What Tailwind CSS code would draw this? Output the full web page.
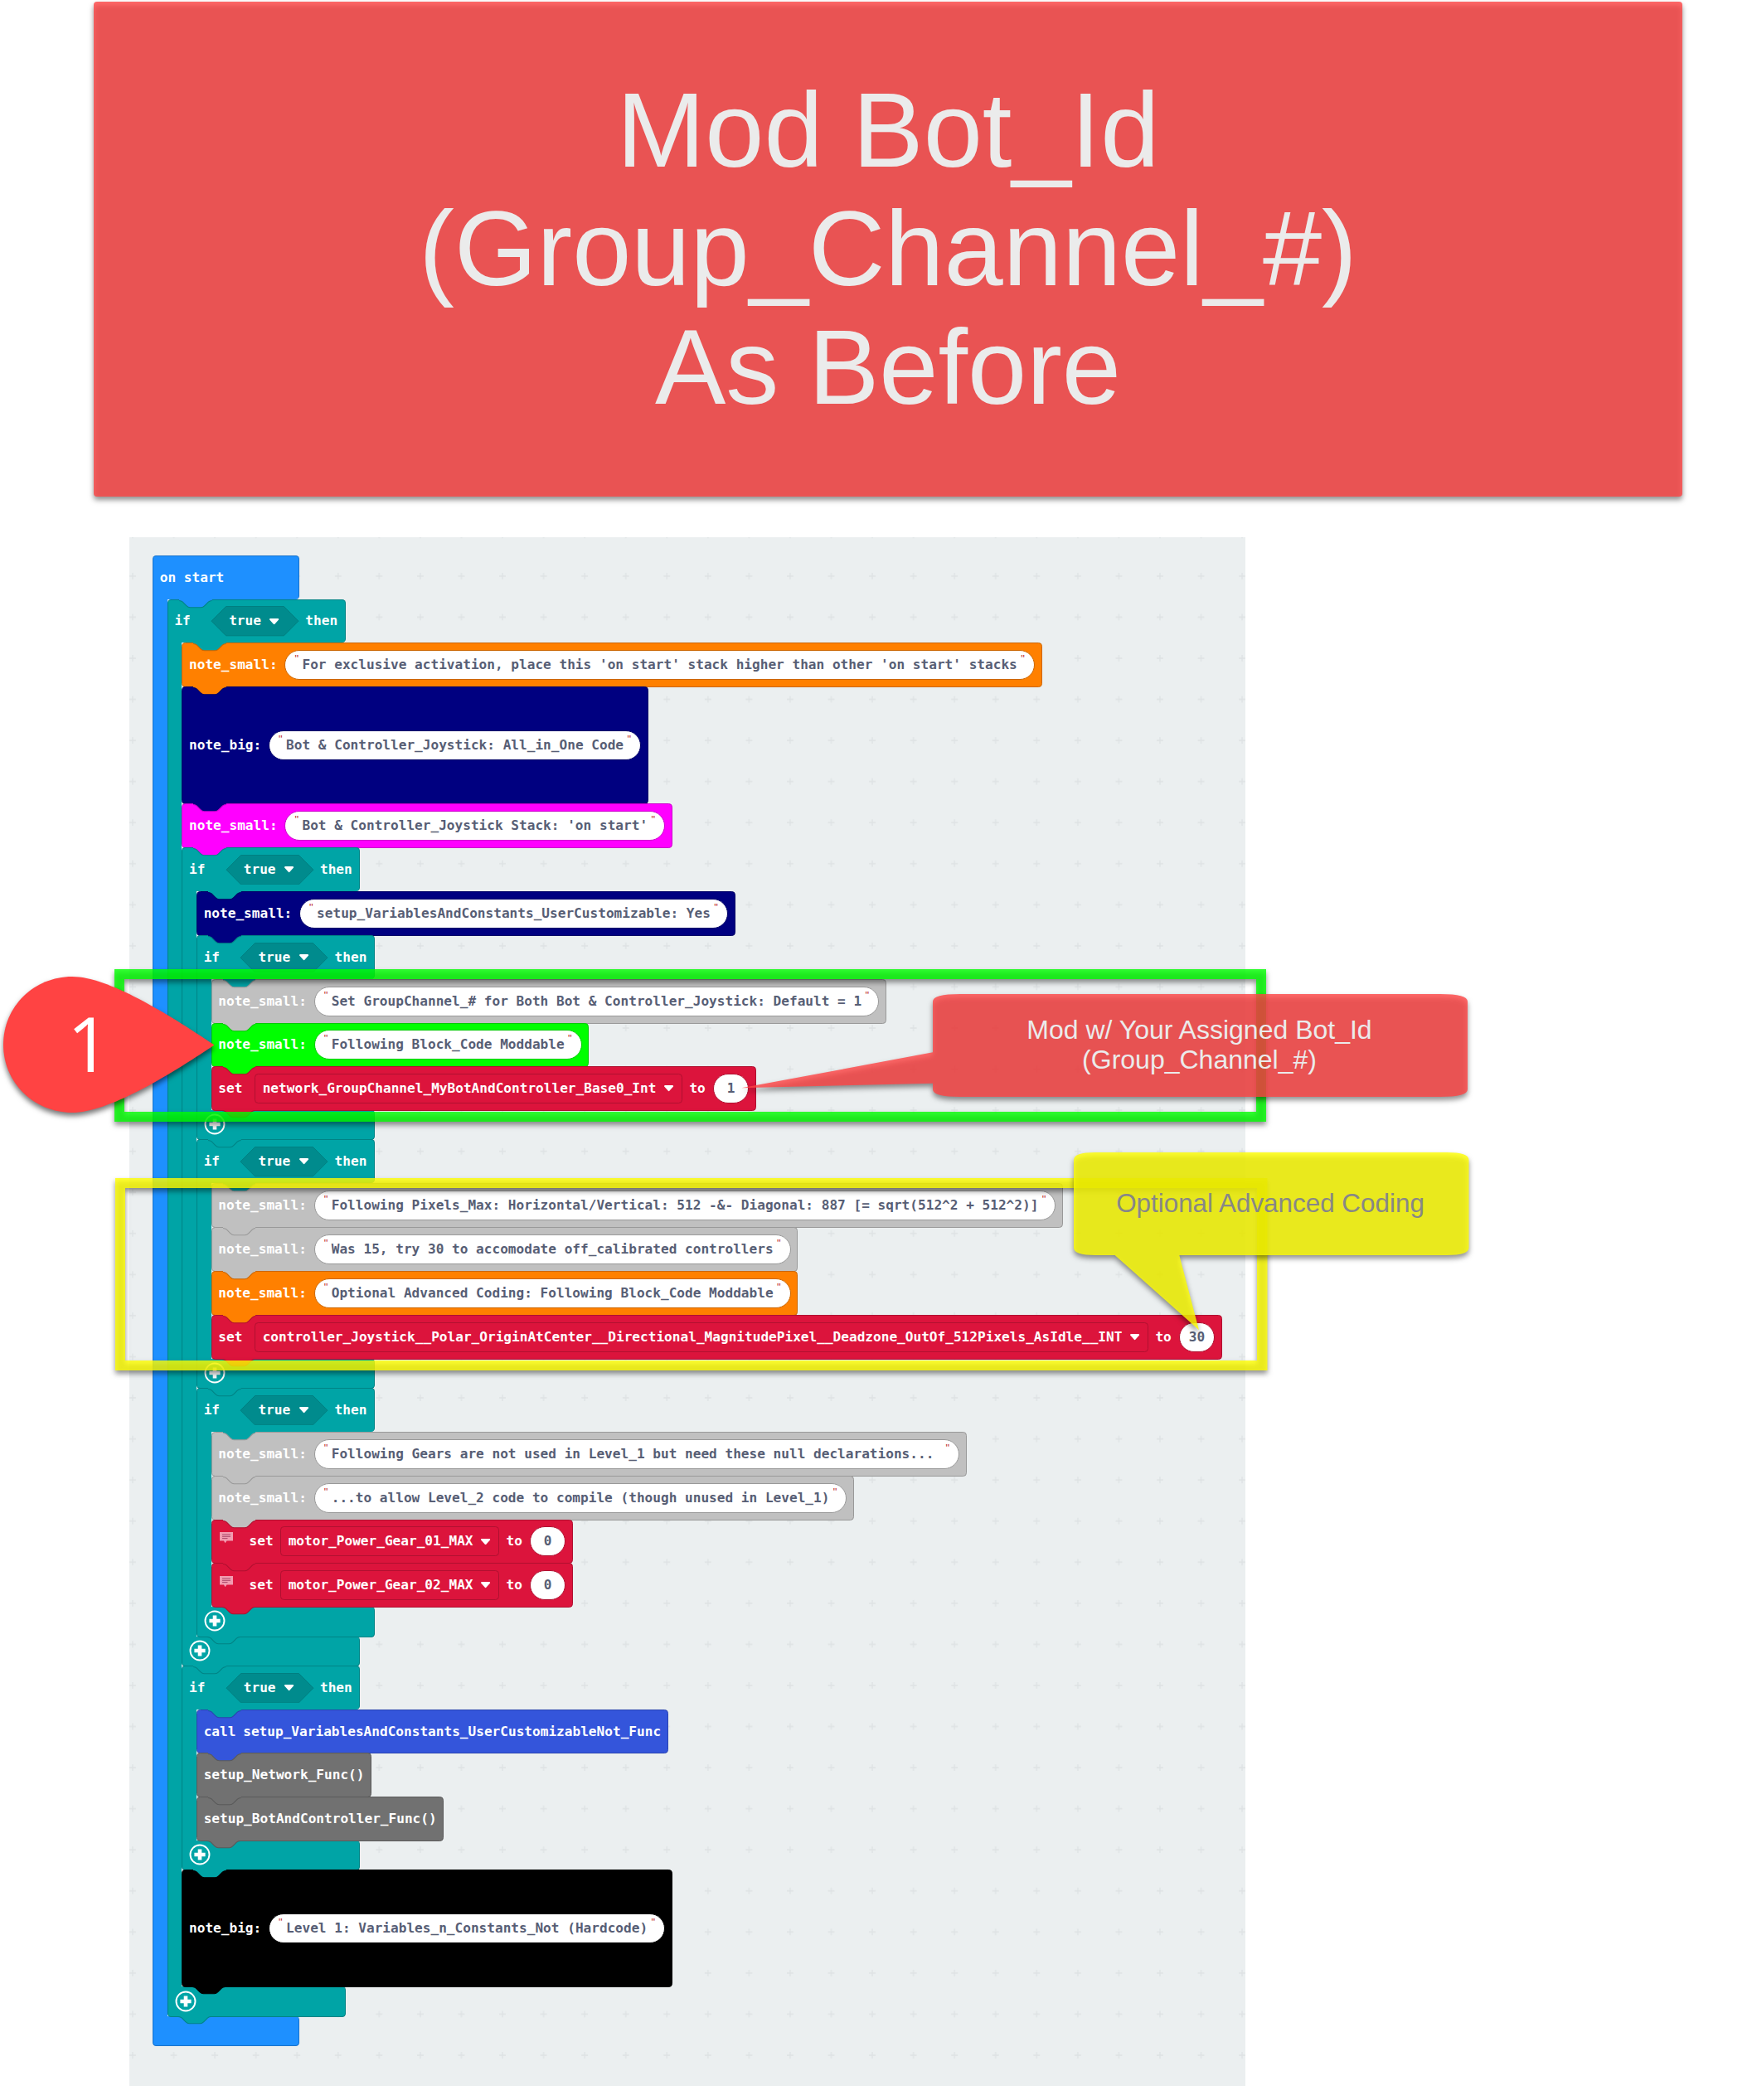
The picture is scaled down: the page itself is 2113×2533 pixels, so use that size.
<!DOCTYPE html>
<html lang="en">
<head>
<meta charset="utf-8">
<title>Mod Bot_Id</title>
<script src="https://cdn.jsdelivr.net/npm/@tailwindcss/browser@4"></script>
</head>
<body class="bg-white">
<div class="relative w-[2113px] h-[2533px] overflow-hidden">

  <!-- Title banner -->
  <header class="relative ml-[113px] mt-[2px] w-[1916px] h-[597px]">
    <div class="absolute inset-0 rounded-[4px] bg-[#ff4343]/80 [filter:drop-shadow(0_4px_3px_rgba(0,0,0,0.54))]"></div>
    <h1 class="relative pt-[83px] text-center text-[128px] leading-[143px] text-[#ebebeb] font-['Liberation_Sans',sans-serif]">Mod Bot_Id<br>(Group_Channel_#)<br>As Before</h1>
  </header>

  <!-- Block workspace -->
  <main class="relative isolate ml-[156px] mt-[49px] w-[1346px] h-[1868px] bg-[#ebeff0] pl-[28px] pt-[21.7px] overflow-hidden">
    <svg class="absolute inset-0 w-full h-full" aria-hidden="true">
      <defs>
        <pattern id="grid" width="49.56" height="49.56" patternUnits="userSpaceOnUse" x="-20.8" y="-27.5">
          <path d="M24.78 20.8v8M20.8 24.78h8" stroke="#dee2e4" stroke-width="1.3"/>
        </pattern>
      </defs>
      <rect width="100%" height="100%" fill="url(#grid)"/>
    </svg>
    <div id="stack" class="relative flex flex-col items-start font-['DejaVu_Sans_Mono',monospace] font-bold text-[16.1px] leading-[20px] text-white whitespace-pre"></div>
  </main>

  <!-- Annotations drawn over the workspace -->
  <svg class="absolute z-50 left-0 top-0 w-[2113px] h-[2533px] font-['Liberation_Sans',sans-serif]" viewBox="0 0 2113 2533">
    <g class="[filter:drop-shadow(0_4px_3px_rgba(0,0,0,0.54))]">
      <path fill="#00ff00" fill-opacity=".8" fill-rule="evenodd" d="M138 1169H1527V1353H138ZM150 1181V1341H1515V1181Z"/>
    </g>
    <g class="[filter:drop-shadow(0_4px_3px_rgba(0,0,0,0.54))]">
      <path fill="#ffff00" fill-opacity=".8" fill-rule="evenodd" d="M139 1421H1528.500V1653H139ZM151 1433V1641H1516V1433Z"/>
    </g>
    <g class="[filter:drop-shadow(0_4px_3px_rgba(0,0,0,0.54))]">
      <path fill="#ff4343" fill-opacity=".8" d="M1158 1199H1737Q1770 1199 1770 1208V1314Q1770 1323 1737 1323H1158Q1125 1323 1125 1314V1306.700L894.300 1312.300L1125 1269.300V1208Q1125 1199 1158 1199Z"/>
    </g>
    <g class="[filter:drop-shadow(0_4px_3px_rgba(0,0,0,0.54))]">
      <path fill="#ffff00" fill-opacity=".8" d="M1321 1390H1745Q1771.500 1390 1771.500 1399V1505Q1771.500 1514 1745 1514H1422.300L1446 1604.300L1344.600 1514H1321Q1295 1514 1295 1505V1399Q1295 1390 1321 1390Z"/>
    </g>
    <g class="[filter:drop-shadow(0_4px_3px_rgba(0,0,0,0.54))]">
      <path fill="#ff4343" d="M258.500 1260.500C201 1222 130 1178 87 1178C41 1178 4 1214 4 1260S41 1342 87 1342C130 1342 201 1299 258.500 1260.500Z"/>
    </g>
    <g text-anchor="middle">
      <text x="107" y="1293" font-size="91" fill="#fff" class="font-['Open_Sans',sans-serif]">1</text>
      <g font-size="32" fill="#ebebeb">
        <text x="1446.500" y="1253">Mod w/ Your Assigned Bot_Id</text>
        <text x="1446.500" y="1289">(Group_Channel_#)</text>
      </g>
      <text x="1532" y="1462" font-size="31.400" fill="#878787">Optional Advanced Coding</text>
    </g>
  </svg>
</div>

<script>
// fill and outline colour of each block family
const C = {
  blue: ['#1e90ff', '#1873cc'], teal: ['#00a4a6', '#008385'], orange: ['#ff8000', '#cc6600'],
  navy: ['#000080', '#000066'], magenta: ['#ff00ff', '#cc00cc'], gray: ['#c0c0c0', '#999999'],
  green: ['#00ff00', '#00cc00'], red: ['#dc143c', '#b01030'], call: ['#3455db', '#2a44af'],
  func: ['#717171', '#5a5a5a'], black: ['#000000', '#000000'],
};
const esc = s => s.replace(/&/g, '&amp;');
const notch = (fill, stroke) => fill ? `<svg class="absolute left-[13.2px] -top-px w-[39.7px] h-[11px]" viewBox="0 -0.9 36 10" preserveAspectRatio="none"><path d="M0 -1V.4C2 .4 3 1 4 2l4 4c1 1 2 2 4 2h12c2 0 3-1 4-2l4-4c1-1 2-1.600 4-1.600V-1z" fill="${fill}"/><path d="M0 .4C2 .4 3 1 4 2l4 4c1 1 2 2 4 2h12c2 0 3-1 4-2l4-4c1-1 2-1.600 4-1.600" fill="none" stroke="${stroke}" stroke-width="1"/></svg>` : '';
const arrow = '<svg class="w-[13.2px] h-[8.8px] shrink-0 -mt-px" viewBox="0 0 12 8"><path d="M2 .8h8c1 0 1.400 1 .8 1.700L6.900 6.900a1.200 1.200 0 0 1-1.800 0L1.200 2.500C.6 1.800 1 .8 2 .8z" fill="#fff"/></svg>';
const pill = (s, st) => `<span class="relative flex items-center h-[36px] rounded-full border bg-white px-[20px] text-[#575e75]" style="border-color:${st}"><i class="absolute left-[11px] top-[2px] not-italic font-normal font-['Liberation_Sans',sans-serif] text-[13px] leading-[16px] text-[#c03030]">"</i>${esc(s)}<i class="absolute right-[11px] top-[2px] not-italic font-normal font-['Liberation_Sans',sans-serif] text-[13px] leading-[16px] text-[#c03030]">"</i></span>`;
const num = (s, st) => `<span class="flex items-center justify-center h-[36px] w-[43.800px] rounded-full border bg-white text-[#575e75]" style="border-color:${st}">${s}</span>`;
const comment = '<svg class="w-[16px] h-[14px] -mt-[8px] ml-[1.500px] mr-[11px] shrink-0" viewBox="0 0 16 14"><path d="M0 0h16v10.500H8.500L6.500 13.300 5 10.500H0z" fill="#f29bb0"/><path d="M3 3h10M3 5.300h10M3 7.600h6.500" stroke="#a8486a" stroke-width="1"/></svg>';

const block = (col, inner, big) => ({ col, html: prev => `<div class="relative flex items-center gap-[8.800px] px-[7.800px] -mb-px rounded-[4.400px] border ${big ? 'h-[141.970px]' : 'h-[53.870px]'}" style="background:${C[col][0]};border-color:${C[col][1]}">${notch(prev && C[prev][0], C[col][1])}${inner}</div>` });
const small = (col, s) => block(col, `<span>note_small:</span>${pill(s, C[col][1])}`);
const large = (col, s) => block(col, `<span>note_big:</span>${pill(s, C[col][1])}`, true);
const set = (name, v, note) => block('red', `${note ? comment : ''}<span class="${note ? '' : 'mr-[6.300px]'}">set</span><span class="flex items-center gap-[8.800px] h-[36px] px-[8.200px] rounded-[4.400px] border border-[#b01030]">${name}${arrow}</span><span>to</span>${num(v, '#b01030')}`);
const cap = (col, head, width, kids, plus) => ({ col, html: prev => {
  const [f, s] = C[col];
  let p = col, body = '';
  for (const k of kids) { body += k.html(p); p = k.col; }
  return `<div class="relative flex flex-col items-start">
    <div class="relative flex items-center h-[52.870px] rounded-t-[4.400px] rounded-br-[4.400px] border-t border-x pl-[7.800px]" style="width:${width}px;background:${f};border-color:${s}">${notch(prev && C[prev][0], s)}${head}</div>
    <div class="flex items-stretch"><div class="w-[17.630px] border-l" style="background:${f};border-color:${s}"></div><div class="relative z-10 flex flex-col items-start">${body}</div></div>
    <div class="relative flex items-center h-[36.220px] -mb-px rounded-b-[4.400px] rounded-tr-[4.400px] border-b border-x" style="width:${width}px;background:${f};border-color:${s}">
      <div class="absolute z-20 left-[16.600px] top-0">${notch(C[p][0], C[p][1])}</div>
      ${plus ? '<svg class="absolute z-30 left-[8px] top-[4.200px] w-[26px] h-[26px]" viewBox="0 0 26 26"><circle cx="13" cy="13" r="11.500" fill="none" stroke="#fff" stroke-width="1.900"/><path d="M13 6.400v13.200M6.400 13h13.200" stroke="#fff" stroke-width="4.600"/></svg>' : ''}
    </div></div>`;
} });
const iff = (...kids) => cap('teal', `<span>if</span><svg class="absolute left-[51.400px] top-[7.800px] w-[107px] h-[36.300px]" viewBox="-.5 -.5 107 36.300"><path d="M.5 17.650 18 0H88L105.500 17.650 88 35.300H18Z" fill="#008b8d" stroke="#007f81"/></svg><span class="absolute left-[73.500px] flex items-center gap-[9.500px]">true${arrow}</span><span class="absolute left-[165.700px]">then</span>`, 215, kids, true);

document.getElementById('stack').innerHTML = cap('blue', '<span>on start</span>', 176.7, [
  iff(
    small('orange', "For exclusive activation, place this 'on start' stack higher than other 'on start' stacks"),
    large('navy', 'Bot & Controller_Joystick: All_in_One Code'),
    small('magenta', "Bot & Controller_Joystick Stack: 'on start'"),
    iff(
      small('navy', 'setup_VariablesAndConstants_UserCustomizable: Yes'),
      iff(
        small('gray', 'Set GroupChannel_# for Both Bot & Controller_Joystick: Default = 1'),
        small('green', 'Following Block_Code Moddable'),
        set('network_GroupChannel_MyBotAndController_Base0_Int', '1'),
      ),
      iff(
        small('gray', 'Following Pixels_Max: Horizontal/Vertical: 512 -&- Diagonal: 887 [= sqrt(512^2 + 512^2)]'),
        small('gray', 'Was 15, try 30 to accomodate off_calibrated controllers'),
        small('orange', 'Optional Advanced Coding: Following Block_Code Moddable'),
        set('controller_Joystick__Polar_OriginAtCenter__Directional_MagnitudePixel__Deadzone_OutOf_512Pixels_AsIdle__INT', '30'),
      ),
      iff(
        small('gray', 'Following Gears are not used in Level_1 but need these null declarations... '),
        small('gray', '...to allow Level_2 code to compile (though unused in Level_1)'),
        set('motor_Power_Gear_01_MAX', '0', true),
        set('motor_Power_Gear_02_MAX', '0', true),
      ),
    ),
    iff(
      block('call', '<span>call</span><span>setup_VariablesAndConstants_UserCustomizableNot_Func</span>'),
      block('func', '<span>setup_Network_Func()</span>'),
      block('func', '<span>setup_BotAndController_Func()</span>'),
    ),
    large('black', 'Level 1: Variables_n_Constants_Not (Hardcode)'),
  ),
], false).html('');
</script>
</body>
</html>
